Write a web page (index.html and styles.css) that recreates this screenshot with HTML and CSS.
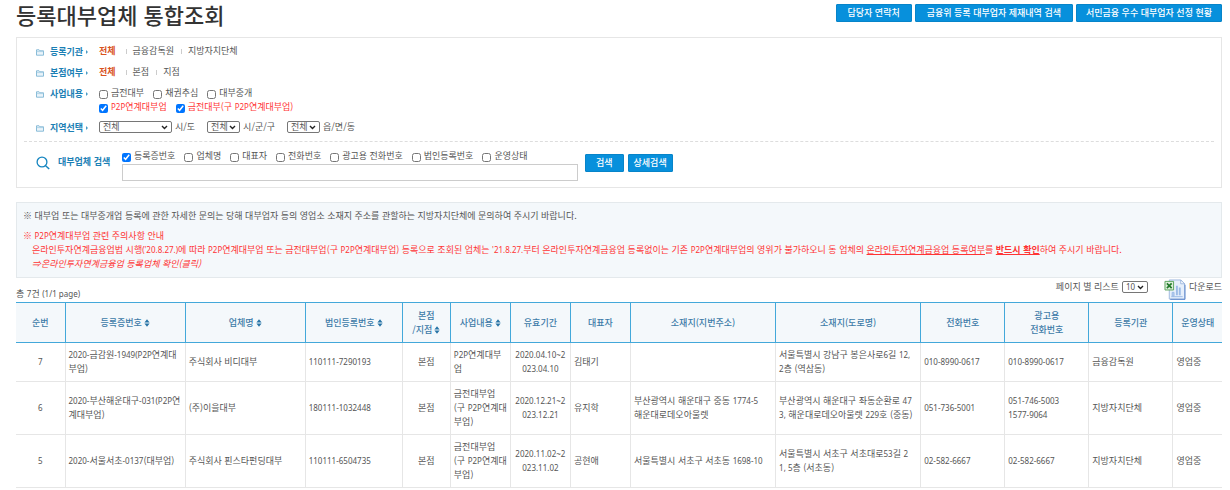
FILE: index.html
```html
<!DOCTYPE html>
<html lang="ko">
<head>
<meta charset="utf-8">
<title>등록대부업체 통합조회</title>
<link rel="stylesheet" href="styles.css">
</head>
<body>
<svg class="defs" aria-hidden="true">
  <symbol id="folder" viewBox="0 0 8 7"><path d="M.5 6.2V.8h2.6l.8 1h3.6v4.4z" fill="#eaf4fa" stroke="#7db4d4" stroke-width=".9"/><path d="M.5 2.6h7" stroke="#9cc8e0" stroke-width=".7"/></symbol>
  <symbol id="sort" viewBox="0 0 6 8"><path d="M3 .3 5.6 3.4H.4zM3 7.7.4 4.6h5.2z" fill="#2874a6"/></symbol>
</svg>
<header class="top">
  <h1>등록대부업체 통합조회</h1>
  <nav class="top-actions">
    <button class="btn" type="button">담당자 연락처</button>
    <button class="btn" type="button">금융위 등록 대부업자 제재내역 검색</button>
    <button class="btn snug" type="button">서민금융 우수 대부업자 선정 현황</button>
  </nav>
</header>
<main>
<form class="filter">
  <div class="frow">
    <svg class="folder"><use href="#folder"/></svg><span class="flabel">등록기관</span>
    <div class="links"><a class="on" href="#">전체</a><a href="#">금융감독원</a><a href="#">지방자치단체</a></div>
  </div>
  <div class="frow">
    <svg class="folder"><use href="#folder"/></svg><span class="flabel">본점여부</span>
    <div class="links"><a class="on" href="#">전체</a><a href="#">본점</a><a href="#">지점</a></div>
  </div>
  <div class="frow">
    <svg class="folder"><use href="#folder"/></svg><span class="flabel">사업내용</span>
    <div class="checks-wrap">
      <div class="checks">
        <label><input type="checkbox">금전대부</label>
        <label><input type="checkbox">채권추심</label>
        <label><input type="checkbox">대부중개</label>
      </div>
      <div class="checks red">
        <label><input type="checkbox" checked><span><span class="n">P2P</span>연계대부업</span></label>
        <label><input type="checkbox" checked><span>금전대부(구 <span class="n">P2P</span>연계대부업)</span></label>
      </div>
    </div>
  </div>
  <div class="frow">
    <svg class="folder"><use href="#folder"/></svg><span class="flabel">지역선택</span>
    <div class="selects">
      <label><select class="wide"><option>전체</option></select>시/도</label>
      <label><select><option>전체</option></select>시/군/구</label>
      <label><select><option>전체</option></select>읍/면/동</label>
    </div>
  </div>
  <div class="search">
    <svg class="lens" viewBox="0 0 14 14"><circle cx="6" cy="6" r="4.9" fill="none" stroke="#1585c0" stroke-width="1.3"/><path d="m9.6 9.8 3.6 3.2" stroke="#1585c0" stroke-width="1.5"/></svg>
    <label class="slabel" for="q">대부업체 검색</label>
    <div class="sfield">
      <div class="checks">
        <label><input type="checkbox" checked>등록증번호</label>
        <label><input type="checkbox">업체명</label>
        <label><input type="checkbox">대표자</label>
        <label><input type="checkbox">전화번호</label>
        <label><input type="checkbox">광고용 전화번호</label>
        <label><input type="checkbox">법인등록번호</label>
        <label><input type="checkbox">운영상태</label>
      </div>
      <input class="query" id="q" type="text">
    </div>
    <div class="sbtns"><button class="btn" type="button">검색</button><button class="btn" type="button">상세검색</button></div>
  </div>
</form>
<section class="notice">
  <p>※ 대부업 또는 대부중개업 등록에 관한 자세한 문의는 당해 대부업자 등의 영업소 소재지 주소를 관할하는 지방자치단체에 문의하여 주시기 바랍니다.</p>
  <div class="red">
    <p>※ <span class="n">P2P</span>연계대부업 관련 주의사항 안내</p>
    <p class="in">온라인투자연계금융업법 시행<span class="n">('20.8.27.)</span>에 따라 <span class="n">P2P</span>연계대부업 또는 금전대부업(구 <span class="n">P2P</span>연계대부업) 등록으로 조회된 업체는 <span class="n">'21.8.27.</span>부터 온라인투자연계금융업 등록없이는 기존 <span class="n">P2P</span>연계대부업의 영위가 불가하오니 동 업체의 <u>온라인투자연계금융업 등록여부</u>를 <u><b>반드시 확인</b></u>하여 주시기 바랍니다.</p>
    <p class="in"><a href="#"><em>⇒온라인투자연계금융업 등록업체 확인(클릭)</em></a></p>
  </div>
</section>
<div class="listbar">
  <span class="total">총 <span class="n">7</span>건 <span class="n">(1/1 page)</span></span>
  <label class="per">페이지 별 리스트<select class="num"><option>10</option></select></label>
  <a class="down" href="#"><svg viewBox="0 0 22 22"><path d="M5 1h12l4 4v16H5z" fill="#e6effb" stroke="#9db8de"/><path d="M17 1v4h4z" fill="#fff" stroke="#8cabd8" stroke-width=".8"/><path d="M6 21.3h15.5V6" fill="none" stroke="#5b85c9"/><path d="M12 7h2v10h-2zM15 9h2v8h-2z" fill="#9cbbe6"/><path d="M8 14h2v4H8zM7 18.5h12" fill="#b6cdee" stroke="#9cbbe6"/><path d="M.5 2.5h9v9h-9z" fill="#dff0dc" stroke="#5aa45c"/><path d="m2.5 4.5 5 5m0-5-5 5" stroke="#237a2b" stroke-width="1.8"/></svg>다운로드</a>
</div>
<table>
  <colgroup><col class="w49"><col class="w120"><col class="w120"><col class="w97"><col class="w48"><col class="w60"><col class="w60"><col class="w60"><col class="w145"><col class="w145"><col class="w84"><col class="w84"><col class="w84"><col class="w49"></colgroup>
  <thead><tr>
    <th>순번</th><th>등록증번호<svg><use href="#sort"/></svg></th><th>업체명<svg><use href="#sort"/></svg></th><th>법인등록번호<svg><use href="#sort"/></svg></th><th>본점<br>/지점<svg><use href="#sort"/></svg></th><th>사업내용<svg><use href="#sort"/></svg></th><th>유효기간</th><th>대표자</th><th>소재지(지번주소)</th><th>소재지(도로명)</th><th>전화번호</th><th>광고용<br>전화번호</th><th>등록기관</th><th>운영상태</th>
  </tr></thead>
  <tbody>
  <tr class="short">
    <td class="c n">7</td><td><span class="n">2020-</span>금감원<span class="n">-1949(P2P</span>연계대<br>부업)</td><td>주식회사 비디대부</td><td class="n">110111-7290193</td><td class="c">본점</td><td><span class="n">P2P</span>연계대부<br>업</td><td class="c n">2020.04.10~2<br>023.04.10</td><td>김태기</td><td></td><td>서울특별시 강남구 봉은사로<span class="n">6</span>길 <span class="n">12,</span><br><span class="n">2</span>층 (역삼동)</td><td class="n">010-8990-0617</td><td class="n">010-8990-0617</td><td>금융감독원</td><td>영업중</td>
  </tr>
  <tr>
    <td class="c n">6</td><td><span class="n">2020-</span>부산해운대구<span class="n">-031(P2P</span>연<br>계대부업)</td><td>(주)이을대부</td><td class="n">180111-1032448</td><td class="c">본점</td><td>금전대부업<br>(구 <span class="n">P2P</span>연계대<br>부업)</td><td class="c n">2020.12.21~2<br>023.12.21</td><td>유지학</td><td>부산광역시 해운대구 중동 <span class="n">1774-5</span><br>해운대로데오아울렛</td><td>부산광역시 해운대구 좌동순환로 <span class="n">47<br>3,</span> 해운대로데오아울렛 <span class="n">229</span>호 (중동)</td><td class="n">051-736-5001</td><td class="n">051-746-5003<br>1577-9064</td><td>지방자치단체</td><td>영업중</td>
  </tr>
  <tr>
    <td class="c n">5</td><td><span class="n">2020-</span>서울서초<span class="n">-0137</span>(대부업)</td><td>주식회사 핀스타펀딩대부</td><td class="n">110111-6504735</td><td class="c">본점</td><td>금전대부업<br>(구 <span class="n">P2P</span>연계대<br>부업)</td><td class="c n">2020.11.02~2<br>023.11.02</td><td>공현애</td><td>서울특별시 서초구 서초동 <span class="n">1698-10</span></td><td>서울특별시 서초구 서초대로<span class="n">53</span>길 <span class="n">2<br>1, 5</span>층 (서초동)</td><td class="n">02-582-6667</td><td class="n">02-582-6667</td><td>지방자치단체</td><td>영업중</td>
  </tr>
  </tbody>
</table>
</main>
</body>
</html>
```

FILE: styles.css
```css
* { box-sizing: border-box; }
body {
  margin: 0;
  padding: 0 8px 0 16px;
  background: #fff;
  color: #555;
  font: 9px/14px "Noto Sans CJK KR", sans-serif;
}
button, input, select { font: inherit; color: inherit; margin: 0; }
a { color: inherit; text-decoration: none; }
p { margin: 0; }
.defs { position: absolute; width: 0; height: 0; }
.n { font-family: "Noto Sans", "Noto Sans CJK KR", sans-serif; font-size: 8px; }
.red { color: #ff3434; }

.top { display: flex; justify-content: space-between; align-items: flex-start; height: 37px; }
h1 { margin: 0; font-size: 22px; line-height: 28px; font-weight: 500; color: #333; }
.top-actions { display: flex; gap: 3px; padding-top: 4px; }
.btn {
  height: 18px;
  padding: 0 11px;
  border: 1px solid #0784c9;
  border-radius: 1px;
  background: #0790dc;
  color: #fff;
  font-weight: 500;
  line-height: 14px;
  white-space: nowrap;
}
.btn.snug { padding: 0 9px; }

.filter { border: 1px solid #e6e6e6; padding: 6px 7px; }
.frow { display: flex; align-items: flex-start; padding-left: 12px; margin-bottom: 6px; }
.folder { width: 8px; height: 7px; margin: 5px 6px 0 0; }
.flabel { width: 49px; font-weight: 700; color: #1b80b5; padding-top: 1px; }
.flabel::after {
  content: "";
  display: inline-block;
  margin-left: 3px;
  border: 2px solid transparent;
  border-left-color: #4a9cc6;
  border-right: 0;
  vertical-align: 1px;
}
.links { display: flex; }
.links a + a::before {
  content: "";
  display: inline-block;
  width: 1px;
  height: 5px;
  margin: 0 6px 0 7px;
  background: #ccc;
}
.links .on { color: #d9531e; font-weight: 700; margin-right: 3px; }
.checks { display: flex; gap: 9px; }
.checks label { display: flex; align-items: center; gap: 3px; white-space: nowrap; }
.checks input { width: 9px; height: 9px; margin-top: 2px; }
.selects { display: flex; gap: 12px; }
.selects label { display: flex; align-items: center; gap: 3px; }
select {
  appearance: none;
  width: 33px;
  height: 12px;
  padding: 0 3px;
  border: 1px solid #767676;
  border-radius: 2px;
  background: #fff url("data:image/svg+xml,%3Csvg xmlns='http://www.w3.org/2000/svg' width='7' height='5'%3E%3Cpath d='M1 1l2.5 2.5L6 1' fill='none' stroke='%23222' stroke-width='1.4'/%3E%3C/svg%3E") no-repeat right 3px center;
  line-height: 10px;
}
select.wide { width: 73px; }

.search {
  display: flex;
  align-items: flex-start;
  border-top: 1px dashed #ddd;
  padding: 7px 0 0 12px;
}
.lens { width: 14px; height: 14px; margin: 7px 8px 0 0; }
.slabel { width: 64px; margin-top: 6px; font-weight: 700; color: #1b80b5; }
.sfield { flex: 0 1 456px; }
.query { display: block; width: 100%; height: 17px; margin-top: 1px; border: 1px solid #ccc; background: #fff; }
.sbtns { display: flex; gap: 4px; margin: 5px 0 0 7px; }
.sbtns .btn { padding: 0 5px; }
.sbtns .btn:first-child { padding: 0 10px; }

.notice {
  margin-top: 14px;
  padding: 6px;
  border: 1px solid #e4e9ec;
  background: #f4f8fb;
  min-height: 76px;
}
.notice .red { margin-top: 6px; }
.notice .in { padding-left: 9px; white-space: nowrap; }

.listbar { display: flex; height: 24px; align-items: flex-start; }
.total { margin: 9px auto 0 0; }
.per { display: flex; align-items: center; gap: 3px; padding-top: 2px; }
.per select { width: 26px; font-family: "Noto Sans", sans-serif; font-size: 8px; }
.down { display: flex; margin-left: 16px; gap: 3px; padding-top: 2px; }
.down svg { width: 22px; height: 21px; margin-top: -1px; }

table { width: 100%; table-layout: fixed; border-collapse: collapse; }
.w48 { width: 48px; } .w49 { width: 49px; } .w60 { width: 60px; }
.w84 { width: 84px; } .w97 { width: 97px; }
.w120 { width: 120px; } .w145 { width: 145px; }
th, td { height: 53px; padding: 0 3px; border: 1px solid #e6e6e6; white-space: nowrap; vertical-align: middle; }
th {
  height: 40px;
  padding: 0;
  border-color: #43a8da;
  background: #f4f8fb;
  color: #3d7ba8;
  font-weight: 500;
}
th svg { width: 6px; height: 8px; margin-left: 2px; vertical-align: -1px; }
td { text-align: left; }
.short td { height: 39px; border-top-color: #43a8da; }
td.c { text-align: center; }
th:first-child, td:first-child { border-left: 0; }
th:last-child, td:last-child { border-right: 0; }
```
